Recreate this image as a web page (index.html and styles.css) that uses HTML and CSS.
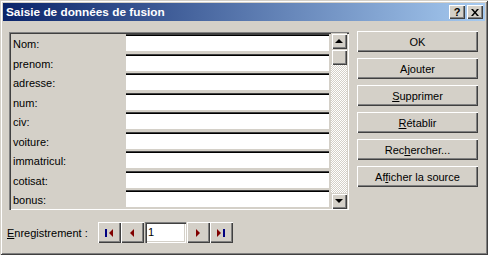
FILE: index.html
```html
<!DOCTYPE html>
<html>
<head>
    <title>Saisie de données de fusion</title>
    <link rel="stylesheet" href="styles.css">
</head>
<body>
    <div class="dialog">
        <div class="titlebar">
            <span class="title">Saisie de données de fusion</span>
            <div class="caption-buttons">
                <span class="cap-btn help">?</span>
                <span class="cap-btn close">
                    <svg width="8" height="7" viewBox="0 0 8 7"><path d="M0 0h2l2 2.5L6 0h2L5 3.5 8 7H6L4 4.5 2 7H0l3-3.5z" fill="#000"/></svg>
                </span>
            </div>
        </div>

        <div class="main">
            <div class="panel">
                <div class="fields">
                    <label>Nom:</label><input type="text">
                    <label>prenom:</label><input type="text">
                    <label>adresse:</label><input type="text">
                    <label>num:</label><input type="text">
                    <label>civ:</label><input type="text">
                    <label>voiture:</label><input type="text">
                    <label>immatricul:</label><input type="text">
                    <label>cotisat:</label><input type="text">
                    <label>bonus:</label><input type="text">
                </div>
                <div class="scrollbar">
                    <div class="sb-btn"><span class="arrow-up"></span></div>
                    <div class="sb-btn"></div>
                    <div class="sb-track"></div>
                    <div class="sb-btn"><span class="arrow-down"></span></div>
                </div>
            </div>

            <div class="actions">
                <button>OK</button>
                <button>A<u>j</u>outer</button>
                <button><u>S</u>upprimer</button>
                <button><u>R</u>établir</button>
                <button>Rec<u>h</u>ercher...</button>
                <button>Af<u>f</u>icher la source</button>
            </div>
        </div>

        <div class="footer">
            <span class="rec-label"><u>E</u>nregistrement :</span>
            <div class="nav">
                <span class="nav-btn">
                    <svg width="9" height="8" viewBox="0 0 9 8"><rect x="0" y="0" width="2" height="8" fill="#000080"/><path d="M8 0v8L4 4z" fill="#800000"/></svg>
                </span>
                <span class="nav-btn">
                    <svg width="5" height="8" viewBox="0 0 5 8"><path d="M4 0v8L0 4z" fill="#800000"/></svg>
                </span>
                <span class="rec-input">1</span>
                <span class="nav-btn">
                    <svg width="5" height="8" viewBox="0 0 5 8"><path d="M0 0v8l4-4z" fill="#800000"/></svg>
                </span>
                <span class="nav-btn">
                    <svg width="9" height="8" viewBox="0 0 9 8"><path d="M0 0v8l4-4z" fill="#800000"/><rect x="6" y="0" width="2" height="8" fill="#000080"/></svg>
                </span>
            </div>
        </div>
    </div>
</body>
</html>
```

FILE: styles.css
```css
body { margin: 0; font-family: "Liberation Sans", Arial, sans-serif; font-size: 11px; color: #000; }
u { text-decoration: underline; text-underline-offset: 1px; }

.dialog { width: 488px; height: 255px; box-sizing: border-box; padding: 3px; background: #d4d0c8;
    box-shadow: inset 1px 1px #d4d0c8, inset -1px -1px #404040, inset 2px 2px #fff, inset -2px -2px #808080; }

.titlebar { height: 18px; display: flex; align-items: center; justify-content: space-between;
    background: linear-gradient(to right, #0a246a, #a6caf0); padding: 0 2px 0 2px; }
.title { color: #fff; font-weight: bold; font-size: 11.8px; padding-left: 1px; }
.caption-buttons { display: flex; gap: 2px; }
.cap-btn { width: 16px; height: 14px; box-sizing: border-box; display: flex; align-items: center; justify-content: center;
    background: #d4d0c8; font-weight: bold; font-size: 11px;
    box-shadow: inset 1px 1px #fff, inset -1px -1px #404040, inset -2px -2px #808080; }

.main { display: flex; align-items: flex-start; padding: 10px 0 0 6px; }

.panel { width: 340px; height: 178px; margin-top: 1px; box-sizing: border-box; padding: 2px; display: flex;
    box-shadow: inset 1px 1px #808080, inset 2px 2px #404040, inset -1px -1px #fff, inset -2px -2px #d4d0c8; }

.fields { display: grid; grid-template-columns: 115px 204px; grid-auto-rows: 19.5px; align-content: start;
    width: 320px; height: 174px; overflow: hidden; }
.fields label { padding: 1px 0 0 2px; line-height: 19px; }
.fields input { height: 18px; margin: 0; padding: 0; box-sizing: border-box; border: none; background: #fff;
    border-right: 1px solid #d4d0c8; border-bottom: 1px solid #d4d0c8;
    box-shadow: inset 0 1px #404040, inset 0 2px #000; }

.scrollbar { width: 16px; height: 176px; display: flex; flex-direction: column; margin-top: -1px; }
.sb-btn { width: 16px; height: 16px; flex: none; box-sizing: border-box; background: #d4d0c8;
    display: flex; align-items: center; justify-content: center;
    box-shadow: inset 1px 1px #d4d0c8, inset 2px 2px #fff, inset -1px -1px #404040, inset -2px -2px #808080; }
.sb-track { flex: 1; background-color: #fff;
    background-image: conic-gradient(#d4d0c8 25%, transparent 0 50%, #d4d0c8 0 75%, transparent 0);
    background-size: 2px 2px; }
.arrow-up { width: 0; height: 0; border-left: 4px solid transparent; border-right: 4px solid transparent; border-bottom: 4px solid #000; }
.arrow-down { width: 0; height: 0; border-left: 4px solid transparent; border-right: 4px solid transparent; border-top: 4px solid #000; }

.actions { display: flex; flex-direction: column; gap: 6px; margin-left: 8px; }
.actions button { width: 121px; height: 21px; padding: 0; border: none; background: #d4d0c8;
    font-family: inherit; font-size: 11px; color: #000;
    box-shadow: inset 1px 1px #fff, inset -1px -1px #404040, inset -2px -2px #808080; }

.footer { display: flex; align-items: center; padding: 12px 0 0 4px; }
.rec-label { width: 91px; }
.nav { display: flex; align-items: center; }
.nav-btn { width: 23px; height: 21px; box-sizing: border-box; display: flex; align-items: center; justify-content: center;
    background: #d4d0c8; box-shadow: inset 1px 1px #fff, inset -1px -1px #404040, inset -2px -2px #808080; }
.rec-input { width: 41px; height: 21px; box-sizing: border-box; margin: 0 1px; padding: 2px 0 0 3px; background: #fff; line-height: 17px;
    box-shadow: inset 1px 1px #808080, inset 2px 2px #404040, inset -1px -1px #fff, inset -2px -2px #d4d0c8; }
```
